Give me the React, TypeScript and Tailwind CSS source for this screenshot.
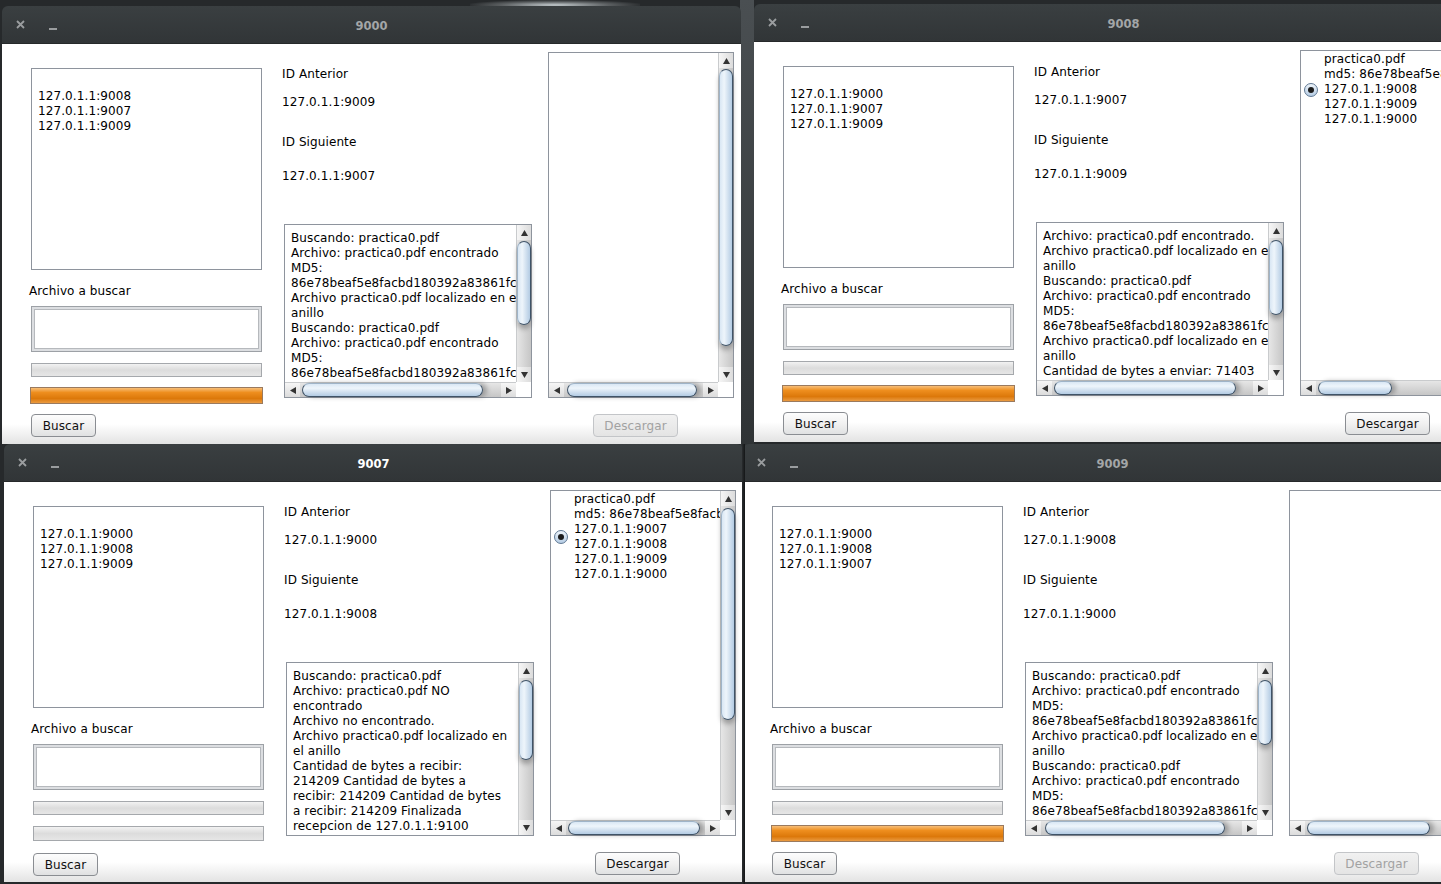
import React from 'react';

type WinData = {
  left: number;
  top: number;
  title: string;
  active: boolean;
  peers: string[];
  prev: string;
  next: string;
  log: string[];
  logV: [number, number];
  logH?: [number, number];
  files?: string[];
  rightV?: [number, number];
  rightH: [number, number];
  orange: boolean;
  canDownload: boolean;
};

const MD5 = '86e78beaf5e8facbd180392a83861fc4';

function Tri({ dir }: { dir: 'up' | 'down' | 'left' | 'right' }) {
  const pts =
    dir === 'up'
      ? '3.5,0 7,6 0,6'
      : dir === 'down'
      ? '0,0 7,0 3.5,6'
      : dir === 'left'
      ? '0,3.5 6,0 6,7'
      : '0,0 6,3.5 0,7';
  const w = dir === 'up' || dir === 'down' ? 7 : 6;
  const h = dir === 'up' || dir === 'down' ? 6 : 7;
  return (
    <svg width={w} height={h} viewBox={`0 0 ${w} ${h}`}>
      <polygon points={pts} fill="#333" />
    </svg>
  );
}

function VScroll({ thumb }: { thumb: [number, number] }) {
  return (
    <div className="w-[15px] flex flex-col border-l border-[#c9cbcd] bg-[linear-gradient(to_right,#f0f0f0,#d9d9d9)]">
      <div className="h-[15px] flex items-center justify-center bg-[linear-gradient(to_right,#f6f6f6,#dcdcdc)]">
        <Tri dir="up" />
      </div>
      <div className="flex-1 flex flex-col bg-[linear-gradient(to_right,#e6e6e6,#c6c6c6)]">
        <div style={{ height: thumb[0] }} />
        <div
          className="rounded-[8px] border border-[#3f5367] border-l-[#9fb4c8] bg-[linear-gradient(to_right,#d9e7f4,#eef5fb_35%,#b3cbe3)] shadow-[0_4px_5px_rgba(0,0,0,0.28)]"
          style={{ height: thumb[1] }}
        />
      </div>
      <div className="h-[15px] flex items-center justify-center bg-[linear-gradient(to_right,#f6f6f6,#dcdcdc)]">
        <Tri dir="down" />
      </div>
    </div>
  );
}

function HScroll({ thumb }: { thumb: [number, number] }) {
  return (
    <div className="flex-1 h-[15px] flex border-t border-[#c9cbcd] bg-[linear-gradient(to_bottom,#f0f0f0,#d9d9d9)]">
      <div className="w-[15px] flex items-center justify-center bg-[linear-gradient(to_bottom,#f6f6f6,#dcdcdc)]">
        <Tri dir="left" />
      </div>
      <div className="flex-1 flex bg-[linear-gradient(to_bottom,#e6e6e6,#c6c6c6)]">
        <div style={{ width: thumb[0] }} />
        <div
          className="rounded-[8px] border border-[#3f5367] border-t-[#9fb4c8] bg-[linear-gradient(to_bottom,#d9e7f4,#eef5fb_35%,#b3cbe3)] shadow-[4px_0_5px_rgba(0,0,0,0.28)]"
          style={{ width: thumb[1] }}
        />
      </div>
      <div className="w-[15px] flex items-center justify-center bg-[linear-gradient(to_bottom,#f6f6f6,#dcdcdc)]">
        <Tri dir="right" />
      </div>
    </div>
  );
}

function ScrollBox({
  className,
  v,
  h,
  children,
}: {
  className: string;
  v?: [number, number];
  h?: [number, number];
  children: React.ReactNode;
}) {
  return (
    <div className={`${className} border border-[#8e949d] bg-white flex flex-col`}>
      <div className="flex flex-1 min-h-0">
        <div className="flex-1 min-w-0 overflow-hidden">{children}</div>
        {v && <VScroll thumb={v} />}
      </div>
      {h && (
        <div className="flex">
          <HScroll thumb={h} />
          {v && <div className="w-[15px] h-[15px] bg-white" />}
        </div>
      )}
    </div>
  );
}

function Button({ label, enabled, w }: { label: string; enabled: boolean; w: string }) {
  return (
    <div
      className={`${w} h-[23px] rounded-[4px] flex items-center justify-center text-[12px] pt-[1px] ${
        enabled
          ? 'border border-[#8a8d92] bg-[linear-gradient(to_bottom,#fdfdfd,#f1f1f1_50%,#e0e1e2)] text-[#111]'
          : 'border border-[#c3c5c8] bg-[linear-gradient(to_bottom,#f1f1f1,#e4e4e4)] text-[#a2a2a2]'
      }`}
    >
      {label}
    </div>
  );
}

function Radio() {
  return (
    <div className="w-[14px] h-[14px] rounded-full border border-[#5f7893] bg-[linear-gradient(to_bottom,#eef4fa,#b5cce4)] flex items-center justify-center shrink-0">
      <div className="w-[6px] h-[6px] rounded-full bg-[#1c1c1c]" />
    </div>
  );
}

function Window({ d }: { d: WinData }) {
  return (
    <div
      className="absolute w-[739px] h-[440px] rounded-t-[6px] overflow-hidden flex flex-col"
      style={{ left: d.left, top: d.top }}
    >
      <div className="h-[38px] shrink-0 bg-[linear-gradient(to_bottom,#3a3f41,#313537)] relative flex items-center justify-center pt-[4px] border-b border-[#26292a]">
        <svg className="absolute left-[14px] top-[14px]" width="9" height="9" viewBox="0 0 9 9">
          <path d="M1 1 L8 8 M8 1 L1 8" stroke="#9a9d9f" strokeWidth="1.8" />
        </svg>
        <div className="absolute left-[47px] top-[22px] w-[8px] h-[2px] bg-[#9a9d9f]" />
        <span
          className={`font-['DejaVu_Sans',sans-serif] font-bold text-[11.5px] ${
            d.active ? 'text-white' : 'text-[#a3a6a7]'
          }`}
        >
          {d.title}
        </span>
      </div>
      <div className="h-[400px] shrink-0 bg-[linear-gradient(to_bottom,#ffffff_0,#ffffff_380px,#e3e3e3_400px)] flex font-['DejaVu_Sans',sans-serif] text-[12px] tracking-[0.1px] leading-[15px] text-black">
        {/* left column */}
        <div className="ml-[29px] w-[231px] flex flex-col">
          <div className="mt-[24px] h-[202px] border border-[#8e949d] bg-white pt-[5px] pl-[6px]">
            <div className="h-[15px]" />
            {d.peers.map((p) => (
              <div key={p}>{p}</div>
            ))}
          </div>
          <div className="mt-[14px] -ml-[2px] h-[15px]">Archivo a buscar</div>
          <div className="mt-[7px] h-[46px] border border-[#9da1a6] bg-[#dcdee1] p-[2px]">
            <div className="h-full border border-[#b6b9bd] bg-white" />
          </div>
          <div className="mt-[11px] h-[14px] border border-[#a5a8ac] bg-[linear-gradient(to_bottom,#f2f2f2,#dcdcdc_50%,#e6e6e6)]" />
          {d.orange ? (
            <div className="mt-[10px] -mx-[1px] h-[17px] border border-[#9a7a5e] bg-[linear-gradient(to_bottom,#f7be78,#ee8e1e_30%,#dc780a_70%,#ea9a40)]" />
          ) : (
            <div className="mt-[11px] h-[15px] border border-[#a5a8ac] bg-[linear-gradient(to_bottom,#f2f2f2,#dcdcdc_50%,#e6e6e6)]" />
          )}
          <div className={d.orange ? 'mt-[10px]' : 'mt-[12px]'}>
            <Button label="Buscar" enabled w="w-[65px]" />
          </div>
        </div>
        {/* middle column */}
        <div className="ml-[20px] w-[250px] flex flex-col">
          <div className="mt-[23px] h-[15px]">ID Anterior</div>
          <div className="mt-[13px] h-[15px]">{d.prev}</div>
          <div className="mt-[25px] h-[15px]">ID Siguiente</div>
          <div className="mt-[19px] h-[15px]">{d.next}</div>
          <ScrollBox className="mt-[40px] ml-[2px] w-[248px] h-[174px]" v={d.logV} h={d.logH}>
            <div className="pt-[6px] pl-[6px] whitespace-nowrap">
              {d.log.map((l, i) => (
                <div key={i}>{l}</div>
              ))}
            </div>
          </ScrollBox>
        </div>
        {/* right column */}
        <div className="ml-[16px] flex flex-col">
          <ScrollBox className="mt-[8px] w-[186px] h-[346px]" v={d.rightV} h={d.rightH}>
            {d.files && (
              <div className="flex items-center pl-[3px] pt-[1px] whitespace-nowrap">
                <Radio />
                <div className="ml-[6px]">
                  {d.files.map((f, i) => (
                    <div key={i}>{f}</div>
                  ))}
                </div>
              </div>
            )}
          </ScrollBox>
          <div className="mt-[16px] ml-[45px]">
            <Button label="Descargar" enabled={d.canDownload} w="w-[85px]" />
          </div>
        </div>
      </div>
    </div>
  );
}

const wins: WinData[] = [
  {
    left: 2,
    top: 6,
    title: '9000',
    active: false,
    peers: ['127.0.1.1:9008', '127.0.1.1:9007', '127.0.1.1:9009'],
    prev: '127.0.1.1:9009',
    next: '127.0.1.1:9007',
    log: [
      'Buscando: practica0.pdf',
      'Archivo: practica0.pdf encontrado',
      'MD5:',
      MD5,
      'Archivo practica0.pdf localizado en el',
      'anillo',
      'Buscando: practica0.pdf',
      'Archivo: practica0.pdf encontrado',
      'MD5:',
      MD5,
      'Archivo practica0.pdf localizado en el',
    ],
    logV: [1, 84],
    logH: [2, 181],
    rightV: [1, 277],
    rightH: [3, 130],
    orange: true,
    canDownload: false,
  },
  {
    left: 754,
    top: 4,
    title: '9008',
    active: false,
    peers: ['127.0.1.1:9000', '127.0.1.1:9007', '127.0.1.1:9009'],
    prev: '127.0.1.1:9007',
    next: '127.0.1.1:9009',
    log: [
      'Archivo: practica0.pdf encontrado.',
      'Archivo practica0.pdf localizado en el',
      'anillo',
      'Buscando: practica0.pdf',
      'Archivo: practica0.pdf encontrado',
      'MD5:',
      MD5,
      'Archivo practica0.pdf localizado en el',
      'anillo',
      'Cantidad de bytes a enviar: 71403',
      'Cantidad de bytes a enviar: 71403',
    ],
    logV: [2, 75],
    logH: [2, 182],
    files: ['practica0.pdf', 'md5: ' + MD5, '127.0.1.1:9008', '127.0.1.1:9009', '127.0.1.1:9000'],
    rightH: [2, 74],
    orange: true,
    canDownload: true,
  },
  {
    left: 743,
    top: 444,
    title: '9009',
    active: false,
    peers: ['127.0.1.1:9000', '127.0.1.1:9008', '127.0.1.1:9007'],
    prev: '127.0.1.1:9008',
    next: '127.0.1.1:9000',
    log: [
      'Buscando: practica0.pdf',
      'Archivo: practica0.pdf encontrado',
      'MD5:',
      MD5,
      'Archivo practica0.pdf localizado en el',
      'anillo',
      'Buscando: practica0.pdf',
      'Archivo: practica0.pdf encontrado',
      'MD5:',
      MD5,
      'Archivo practica0.pdf localizado en el',
    ],
    logV: [2, 65],
    logH: [4, 180],
    rightH: [2, 123],
    orange: true,
    canDownload: false,
  },
  {
    left: 4,
    top: 444,
    title: '9007',
    active: true,
    peers: ['127.0.1.1:9000', '127.0.1.1:9008', '127.0.1.1:9009'],
    prev: '127.0.1.1:9000',
    next: '127.0.1.1:9008',
    log: [
      'Buscando: practica0.pdf',
      'Archivo: practica0.pdf NO',
      'encontrado',
      'Archivo no encontrado.',
      'Archivo practica0.pdf localizado en',
      'el anillo',
      'Cantidad de bytes a recibir:',
      '214209 Cantidad de bytes a',
      'recibir: 214209 Cantidad de bytes',
      'a recibir: 214209 Finalizada',
      'recepcion de 127.0.1.1:9100',
      'Archivo recibido correctamente',
    ],
    logV: [2, 80],
    files: [
      'practica0.pdf',
      'md5: ' + MD5,
      '127.0.1.1:9007',
      '127.0.1.1:9008',
      '127.0.1.1:9009',
      '127.0.1.1:9000',
    ],
    rightV: [2, 212],
    rightH: [2, 132],
    orange: false,
    canDownload: true,
  },
];

export default function App() {
  return (
    <div className="relative w-[1441px] h-[884px] overflow-hidden bg-[#26292b]">
      <div className="absolute left-[470px] top-0 w-[170px] h-[10px] bg-[radial-gradient(ellipse_at_center,#c3cacd_0%,#5b5f61_45%,transparent_75%)]" />
      <div className="absolute left-[740px] top-0 w-[14px] h-[446px] bg-[linear-gradient(to_bottom,#4a4f52,#2f3335)]" />
      {wins.map((w) => (
        <Window key={w.title} d={w} />
      ))}
      <div className="absolute left-[742px] top-[444px] w-[3px] h-[440px] bg-[linear-gradient(to_right,#2a2d2f,#141617)]" />
    </div>
  );
}
